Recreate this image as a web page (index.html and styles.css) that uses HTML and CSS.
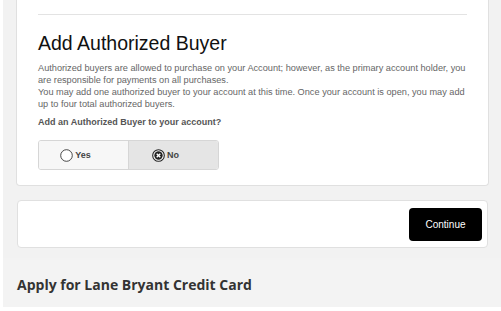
FILE: index.html
```html
<!DOCTYPE html>
<html lang="en">
<head>
  <meta charset="UTF-8">
  <meta name="viewport" content="width=device-width, initial-scale=1.0">
  <title>Add Authorized Buyer</title>
  <link rel="stylesheet" href="styles.css">
</head>
<body>
  <div class="page">
    <div class="card buyer-card">
      <hr class="divider">
      <h1>Add Authorized Buyer</h1>
      <p class="info">
        Authorized buyers are allowed to purchase on your Account; however, as the primary account holder, you are responsible for payments on all purchases.<br>
        You may add one authorized buyer to your account at this time. Once your account is open, you may add up to four total authorized buyers.
      </p>
      <p class="question">Add an Authorized Buyer to your account?</p>
      <div class="choice">
        <label class="option">
          <svg class="radio" viewBox="0 0 13 13" width="13" height="13">
            <circle cx="6.5" cy="6.5" r="5.8" fill="#fff" stroke="#333" stroke-width="0.9"/>
          </svg>
          Yes
        </label>
        <label class="option selected">
          <svg class="radio" viewBox="0 0 13 13" width="13" height="13">
            <circle cx="6.5" cy="6.5" r="5.8" fill="#fff" stroke="#222" stroke-width="1.1"/>
            <circle cx="6.5" cy="6.5" r="4.2" fill="#222"/>
            <path d="M4.7 4.7 L8.3 8.3 M8.3 4.7 L4.7 8.3" stroke="#fff" stroke-width="1.4"/>
          </svg>
          No
        </label>
      </div>
    </div>

    <div class="card action-card">
      <button class="continue">Continue</button>
    </div>

    <div class="footer">
      <h2>Apply for Lane Bryant Credit Card</h2>
    </div>
  </div>
</body>
</html>
```

FILE: styles.css
```css
body {
  margin: 0;
  background-color: #fff;
  font-family: "Liberation Sans", Arial, sans-serif;
  color: #333;
}
.page {
  margin-left: 3px;
  height: 307px;
  overflow: hidden;
  background-color: #f2f2f2;
  padding: 0 12px 0 13px;
}
.card {
  background-color: #fff;
  border: 1px solid #e0e0e0;
  border-radius: 4px;
}
.buyer-card {
  border-top: none;
  border-radius: 0 0 4px 4px;
  padding: 14px 21px 15px 21px;
}
.divider {
  margin: 0;
  border: none;
  border-top: 1px solid #e3e3e3;
}
h1 {
  margin: 17px 0 0;
  font-size: 19.5px;
  line-height: 23px;
  font-weight: normal;
  color: #111;
}
.info {
  margin: 7px 0 0;
  font-size: 9.2px;
  line-height: 12px;
  color: #666;
}
.question {
  margin: 6px 0 0;
  font-size: 9px;
  line-height: 12px;
  font-weight: bold;
  color: #555;
}
.choice {
  display: flex;
  width: 181px;
  height: 30px;
  margin-top: 12px;
  border: 1px solid #d6d6d6;
  border-radius: 3px;
  overflow: hidden;
  box-sizing: border-box;
}
.option {
  flex: 1;
  display: flex;
  align-items: center;
  justify-content: center;
  gap: 2px;
  padding-right: 16px;
  font-size: 9px;
  font-weight: bold;
  color: #444;
  background-color: #f7f7f7;
}
.option.selected {
  background-color: #e5e5e5;
  border-left: 1px solid #d6d6d6;
}
.action-card {
  margin: 14px 1px 0;
  height: 46px;
  display: flex;
  justify-content: flex-end;
  align-items: center;
  padding-right: 5px;
}
.continue {
  background-color: #000;
  color: #fff;
  border: none;
  border-radius: 4px;
  width: 73px;
  height: 33px;
  font-family: "Liberation Sans", Arial, sans-serif;
  font-size: 10px;
}
.footer {
  margin: 10px -12px 0 -13px;
  padding: 17px 14px 0;
  background-color: #f3f3f3;
  height: 60px;
}
.footer h2 {
  margin: 0;
  font-family: "Open Sans", sans-serif;
  font-size: 14px;
  font-weight: bold;
  color: #333;
}
```
